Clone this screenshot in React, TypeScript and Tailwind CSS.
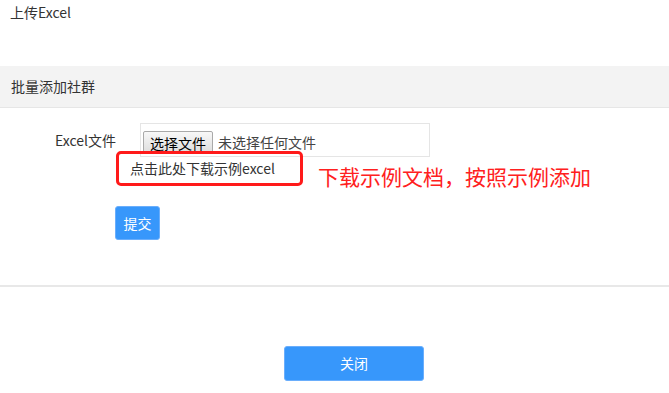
import React from 'react';

const font = "font-['Noto_Sans_CJK_SC','Noto_Sans',sans-serif]";

const App = () => {
  return (
    <div className={`w-[669px] h-[393px] bg-white text-[#333] text-[14px] ${font}`}>
      <div className="h-[66px] pl-[10px] pt-[2px] leading-[20px]">上传Excel</div>

      <div className="flex h-[42px] items-center border-b border-[#e6e6e6] bg-[#f3f3f3] pl-[11px]">
        批量添加社群
      </div>

      <div className="border-b-2 border-[#e8e8e8] pb-[45px] pt-[15px]">
        <div className="flex items-center">
          <label className="w-[116px] text-right">Excel文件</label>
          <div className="ml-[24px] flex h-[34px] w-[290px] items-start border border-[#e5e5e5] pl-[2px] pt-[7px]">
            <button className="h-[23px] rounded-[2px] border border-[#a9a9a9] bg-gradient-to-b from-[#f8f8f8] to-[#dddddd] px-[6px] text-[14px] leading-[20px] text-black">
              选择文件
            </button>
            <span className="ml-[5px] text-[14px] leading-[23px] text-[#444]">未选择任何文件</span>
          </div>
        </div>

        <div className="relative ml-[130px] h-[21px] w-fit pt-[1px] leading-[20px]">
          <a className="cursor-pointer text-[#333]">点击此处下载示例excel</a>
          <div className="pointer-events-none absolute left-[-14px] top-[-6px] h-[35px] w-[187px] rounded-[5px] border-[3px] border-[#ff1a1a]" />
          <span className="absolute left-[188px] top-[5px] whitespace-nowrap text-[21px] leading-[28px] text-[#ff2020]">
            下载示例文档，按照示例添加
          </span>
        </div>

        <button className="ml-[115px] mt-[28px] h-[34px] w-[45px] rounded-[3px] border border-[#6aaefc] bg-[#3797fb] text-white">
          提交
        </button>
      </div>

      <button className="ml-[284px] mt-[59px] h-[35px] w-[140px] rounded-[3px] border border-[#6aaefc] bg-[#3797fb] text-white">
        关闭
      </button>
    </div>
  );
};

export default App;
